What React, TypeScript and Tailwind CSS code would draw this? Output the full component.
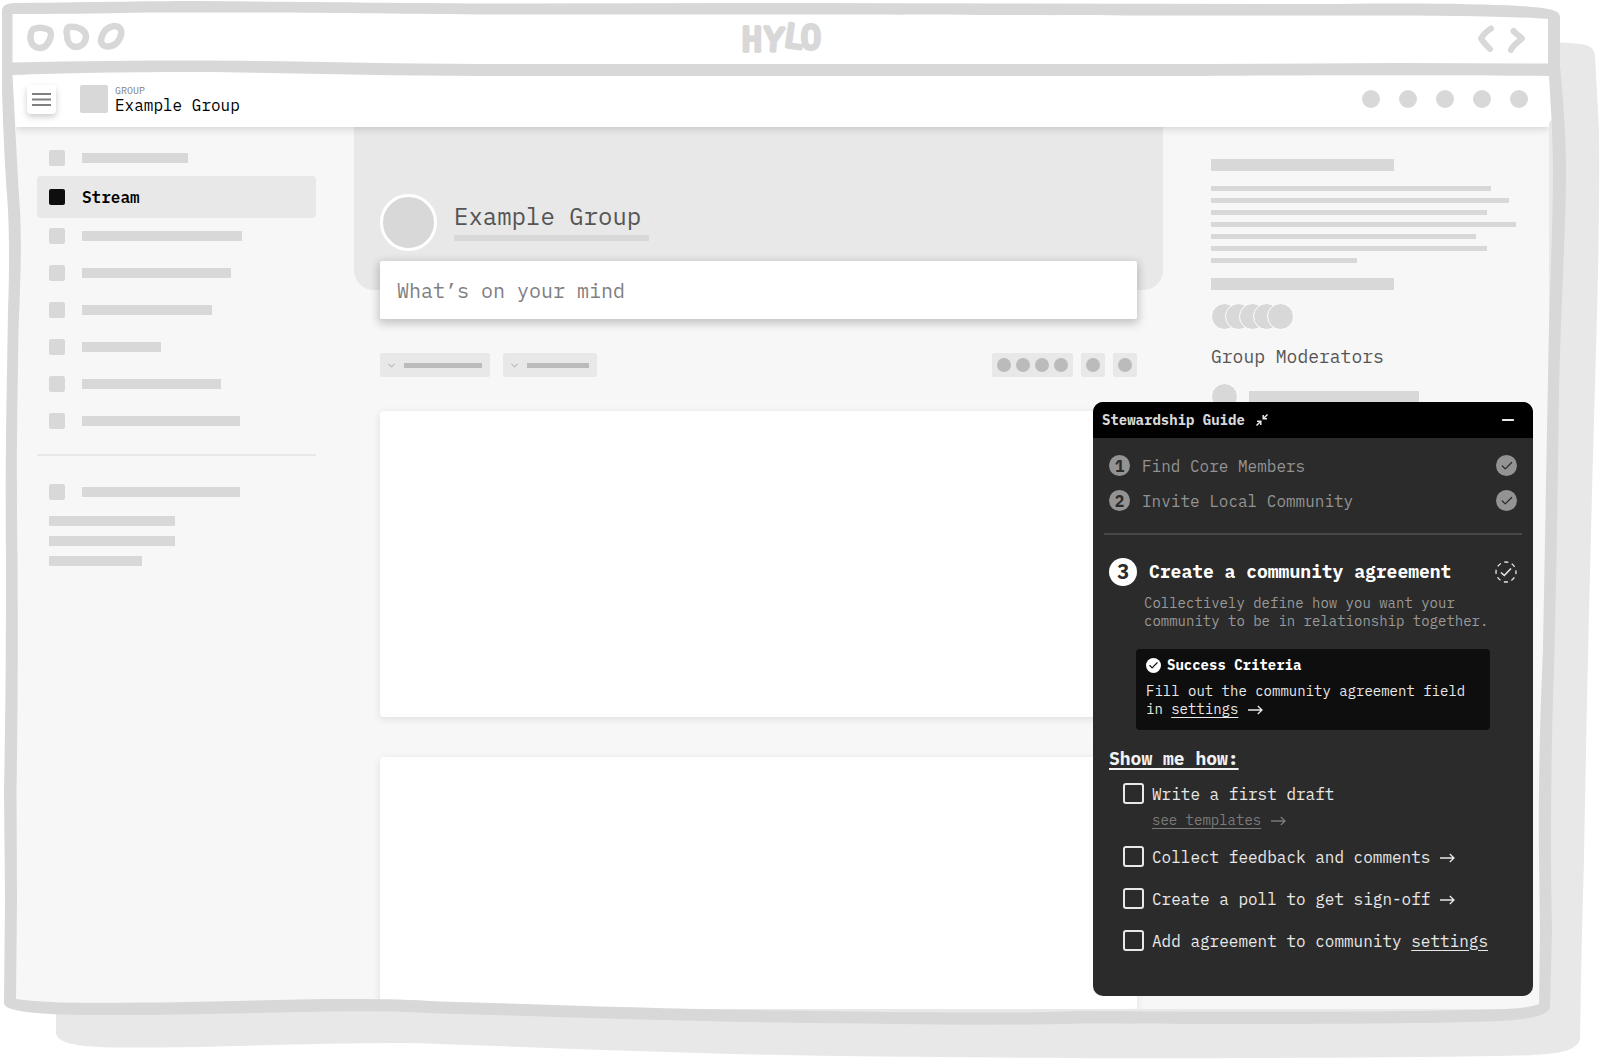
import { Check, ChevronDown, Minus } from "lucide-react";
import type { ReactNode } from "react";

const navBefore = ["w-[106px]"];
const navAfter = ["w-[160px]", "w-[149px]", "w-[130px]", "w-[79px]", "w-[139px]", "w-[158px]"];
const navFooter = ["w-[126px]", "w-[126px]", "w-[93px]"];
const aboutLines = [
  "w-[280px]",
  "w-[298px]",
  "w-[276px]",
  "w-[305px]",
  "w-[265px]",
  "w-[276px]",
  "w-[146px]",
];

const doneSteps = ["Find Core Members", "Invite Local Community"];

function Arrow() {
  return (
    <svg
      viewBox="0 0 15 10"
      className="ml-[10px] inline-block h-[10px] w-[15px] shrink-0"
      fill="none"
      stroke="currentColor"
      strokeWidth="1.3"
    >
      <path d="M0 5h14M9.8 1l4.2 4-4.2 4" />
    </svg>
  );
}

/* Drop shadow of the sketched window */
function WindowShadow() {
  return (
    <svg
      viewBox="0 0 1600 1059"
      preserveAspectRatio="none"
      className="absolute inset-0 -z-10 h-full w-full"
    >
      <path
        fill="#e8e8e8"
        d="M56 1000 V1034 C60 1044 76 1046 110 1047.500 C200 1048.500 290 1043 410 1043 C500 1046 600 1050 700 1053 C800 1056 900 1057 1000 1057.500 C1150 1059 1350 1058 1500 1056 C1550 1055 1576 1054 1580 1039 C1581 980 1582 920 1584 860 C1586 740 1590 560 1594 420 C1597 320 1600 220 1599 130 L1595 56 C1594 44 1585 44 1560 42.500 L1552 42 V120 L1540 130 V1000 Z"
      />
    </svg>
  );
}

/* Hand drawn border of the window and the line under its title bar */
function WindowFrame() {
  return (
    <svg
      viewBox="0 0 1600 1059"
      preserveAspectRatio="none"
      className="pointer-events-none absolute inset-0 z-20 h-full w-full"
    >
      <path
        fill="#d8d8d8"
        fillRule="evenodd"
        d="M2 12 C2 5 6 3 18 3 C100 2 160 1 200 1 C300 2 400 3 480 3.500 L780 3 L1340 4 C1420 3 1480 4 1520 6 C1545 8 1560 9 1560 17 V66 C1563 100 1566 130 1566 170 C1566 230 1561 300 1559 390 C1558 480 1556 600 1554 670 C1551 750 1550 850 1552 930 L1550 1006 C1550 1016 1530 1019 1500 1021 C1400 1025 1200 1024 1080 1023.500 C1000 1026 900 1024 780 1022.500 C660 1021 540 1016 440 1013.500 C400 1011 360 1010.500 300 1012 C200 1014 130 1016 60 1014.500 C25 1013 4 1010 4 1003 L5 900 L4 790 C6 700 6 620 6 560 C5 460 7 380 8 310 C10 260 9 220 7 195 C4 150 3 120 2 90 Z
           M12.500 14 V62.500 C80 61 140 60.500 200 60.500 C300 61 380 63.500 480 64 H1200 L1400 63 L1548 63.500 V19 C1520 16.500 1450 15.500 1340 15.500 C1100 16 1000 14.500 780 14.500 H480 C350 13.500 250 12 150 12.500 C100 13.500 50 14 12.500 14 Z
           M12.500 75 C60 73 130 72 200 72 C300 73 380 75.500 480 76 H1200 C1340 75 1450 75 1549 76 C1551 110 1553 140 1553 170 C1553 230 1549 300 1548 380 C1546 480 1544 600 1543 650 C1539 740 1538.500 800 1539 860 L1540 930 L1539 1004 C1530 1008 1510 1009 1490 1009.500 C1400 1012.500 1200 1012 1080 1011 C1000 1014 900 1012 780 1010.500 C660 1009 540 1004 440 1001.500 C400 999 360 998.500 300 999.500 C200 1002 130 1003.500 60 1002.500 C40 1001.500 25 1000.500 16 999 L17 900 L16.500 790 C18 700 18 620 17.500 560 C16 460 18 380 18.500 330 C21 270 21.500 240 20 210 C18 180 15 120 12.500 75 Z"
      />
    </svg>
  );
}

function TitleBar() {
  return (
    <div className="mr-[60px] grid h-[71px] grid-cols-3 items-center pl-6 text-[#d8d8d8]">
      <svg
        viewBox="24 18 104 35"
        className="h-[35px] w-[104px]"
        fill="none"
        stroke="currentColor"
        strokeWidth="6.5"
        strokeLinejoin="round"
      >
        <path d="M35 28.500 C39 27.500 46 27.500 49 30 C54 34 48 48 40 48 C33 48 30 42 30.500 36 C31 32 32 29 35 28.500Z" />
        <path d="M69 27 C76 26 85 29 86 36 C86 42 82 47 75 47 C69 46 67 40 67 35 C66 31 67 28 69 27Z" />
        <path d="M114 26 C120 26 122 30 121 35 C119 42 114 47 107 46.500 C101 46 100 41 102 36 C104 30 108 27 114 26Z" />
      </svg>
      <svg
        viewBox="0 0 84 35"
        className="h-[35px] w-[84px] justify-self-center overflow-visible"
        fill="currentColor"
        stroke="currentColor"
        strokeWidth="4"
        strokeLinejoin="round"
        fontSize="33"
      >
        <text x="2 23 43 61" y="33 32 28 31" rotate="0 4 8 0">
          HYLO
        </text>
      </svg>
      <svg
        viewBox="1476 18 64 35"
        className="h-[35px] w-[64px] justify-self-end"
        fill="none"
        stroke="currentColor"
        strokeWidth="6"
        strokeLinecap="round"
        strokeLinejoin="round"
      >
        <path d="M1491 28.500 C1487 31 1483 35 1481 38.500 C1483 42 1487 46 1490 49" />
        <path d="M1513.500 31 C1516 34 1520 36 1522 38.500 C1518 42 1512 46 1511 50" />
      </svg>
    </div>
  );
}

function AppHeader() {
  return (
    <header className="relative z-10 flex h-14 items-center bg-white pr-[21px] pl-[11px] shadow-[0_2px_8px_rgba(0,0,0,0.15)]">
      <button
        aria-label="Menu"
        className="flex size-[29px] items-center justify-center rounded-sm bg-white text-[#808080] shadow-[0_3px_6px_rgba(0,0,0,0.2)]"
      >
        <svg viewBox="0 0 19 13" className="h-[13px] w-[19px]" stroke="currentColor" strokeWidth="2">
          <path d="M0 1h19M0 6.500h19M0 12h19" />
        </svg>
      </button>
      <div className="ml-6 size-7 rounded-xs bg-[#d8d8d8]" />
      <div className="ml-[7px] pt-0.5">
        <div className="text-[10px] leading-[10px] text-[#808080]">GROUP</div>
        <div className="text-base leading-[18px] text-black">Example Group</div>
      </div>
      <div className="ml-auto flex gap-[19px]">
        {[0, 1, 2, 3, 4].map((i) => (
          <span key={i} className="size-[18px] rounded-full bg-[#d8d8d8]" />
        ))}
      </div>
    </header>
  );
}

function NavRow({ width }: { width: string }) {
  return (
    <div className="flex h-[37px] items-center gap-[17px] px-3">
      <span className="size-4 rounded-xs bg-[#d8d8d8]" />
      <span className={`h-[10px] bg-[#d8d8d8] ${width}`} />
    </div>
  );
}

function Sidebar() {
  return (
    <nav className="w-[279px] shrink-0 pt-3">
      {navBefore.map((w) => (
        <NavRow key={w} width={w} />
      ))}
      <a
        href="#stream"
        className="flex h-[42px] items-center gap-[17px] rounded bg-[#e8e8e8] px-3 font-semibold text-black"
      >
        <span className="size-4 rounded-xs bg-[#0e0e0e]" />
        Stream
      </a>
      <div className="-mt-px">
        {navAfter.map((w) => (
          <NavRow key={w} width={w} />
        ))}
      </div>
      <hr className="mt-[15px] mb-[17px] border-t-2 border-[#e8e8e8]" />
      <NavRow width="w-[158px]" />
      <div className="mt-[6px] flex flex-col gap-[10px] px-3">
        {navFooter.map((w, i) => (
          <span key={i} className={`h-[10px] bg-[#d8d8d8] ${w}`} />
        ))}
      </div>
    </nav>
  );
}

function FilterButton({ label, width }: { label: string; width: string }) {
  return (
    <button
      aria-label={label}
      className="flex h-6 items-center gap-[7px] rounded-xs bg-[#e8e8e8] px-[6px] text-[#bbb]"
    >
      <ChevronDown size={11} strokeWidth={2.5} />
      <span className={`mr-[2px] h-[5px] bg-[#bbb] ${width}`} />
    </button>
  );
}

function ViewButton({ label }: { label: string }) {
  return (
    <button
      aria-label={label}
      className="flex size-6 items-center justify-center rounded-xs bg-[#e8e8e8]"
    >
      <span className="size-[14px] rounded-full bg-[#bbb]" />
    </button>
  );
}

function Stream() {
  return (
    <main className="flex min-w-0 flex-1 flex-col">
      <div className="flex h-[163px] items-end gap-[17px] rounded-b-[20px] bg-[#e8e8e8] px-[26px] pb-[39px]">
        <span className="size-[57px] shrink-0 rounded-full border-[3px] border-white bg-[#d8d8d8]" />
        <div className="mb-[10px] w-[195px]">
          <h1 className="text-2xl leading-8 whitespace-nowrap text-[#555]">Example Group</h1>
          <div className="mt-[3px] h-[6px] bg-[#d8d8d8]" />
        </div>
      </div>
      <div className="flex flex-1 flex-col px-[26px]">
        <input
          type="text"
          aria-label="New post"
          placeholder="What’s on your mind"
          className="-mt-[29px] h-[58px] w-full rounded-xs bg-white px-[17px] text-xl text-[#555] shadow-[0_3px_8px_2px_rgba(0,0,0,0.2)] placeholder:text-[#808080]"
        />
        <div className="mt-[34px] flex items-center">
          <div className="flex gap-[13px]">
            <FilterButton label="Sort" width="w-[78px]" />
            <FilterButton label="Type" width="w-[62px]" />
          </div>
          <div className="ml-auto flex items-center gap-2">
            <div className="flex h-6 items-center gap-[5px] rounded-xs bg-[#e8e8e8] px-[5px]">
              {[0, 1, 2, 3].map((i) => (
                <span key={i} className="size-[14px] rounded-full bg-[#bbb]" />
              ))}
            </div>
            <ViewButton label="Search" />
            <ViewButton label="Settings" />
          </div>
        </div>
        <article className="mt-[34px] h-[306px] rounded-sm bg-white shadow-[0_2px_8px_rgba(0,0,0,0.1)]" />
        <article className="mt-10 flex-1 rounded-t-sm bg-white shadow-[0_2px_8px_rgba(0,0,0,0.1)]" />
      </div>
    </main>
  );
}

function About() {
  return (
    <aside className="w-[306px] shrink-0 pt-8">
      <div className="h-3 w-[183px] bg-[#d8d8d8]" />
      <div className="mt-[15px] flex flex-col gap-[7px]">
        {aboutLines.map((w, i) => (
          <span key={i} className={`h-[5px] bg-[#d8d8d8] ${w}`} />
        ))}
      </div>
      <div className="mt-[15px] h-3 w-[183px] bg-[#d8d8d8]" />
      <div className="mt-[13px] flex -space-x-[13px]">
        {[0, 1, 2, 3, 4].map((i) => (
          <span key={i} className="size-[27px] rounded-full border border-white bg-[#d8d8d8]" />
        ))}
      </div>
      <h2 className="mt-[15px] text-lg leading-6 text-[#555]">Group Moderators</h2>
      <div className="mt-[14px] flex items-center gap-[11px]">
        <span className="size-[27px] rounded-full border border-white bg-[#d8d8d8]" />
        <span className="h-[11px] w-[170px] bg-[#d8d8d8]" />
      </div>
    </aside>
  );
}

function Task({ id, note, children }: { id: string; note?: ReactNode; children: ReactNode }) {
  return (
    <li>
      <div className="flex h-[21px] items-center gap-2">
        <input
          id={id}
          type="checkbox"
          className="size-[21px] shrink-0 appearance-none rounded-[3px] border-2 border-[#e8e8e8] checked:bg-[#e8e8e8]"
        />
        <label htmlFor={id} className="whitespace-nowrap">
          {children}
        </label>
      </div>
      {note}
    </li>
  );
}

function StewardshipGuide() {
  return (
    <section className="absolute right-4 bottom-[13px] z-10 w-[440px] overflow-hidden rounded-[10px] bg-[#2b2b2b] text-[#e8e8e8]">
      <div className="flex h-9 items-center bg-black px-[9px]">
        <h2 className="text-sm font-bold text-[#d8d8d8]">Stewardship Guide</h2>
        <button aria-label="Collapse" className="ml-[11px]">
          <svg viewBox="0 0 12 12" className="size-3" fill="none" stroke="currentColor" strokeWidth="1.5">
            <path d="M11.500 .5L7.500 4.500M7.200 1v3.800H11M.5 11.500l4-4M1 7.200h3.800V11" />
          </svg>
        </button>
        <button aria-label="Minimize" className="ml-auto mr-[7px]">
          <Minus size={18} strokeWidth={2.5} />
        </button>
      </div>

      <div className="px-4 pt-[17px] pb-[45px]">
        <ol className="flex flex-col gap-[14px] text-[#939393]">
          {doneSteps.map((step, i) => (
            <li key={step} className="flex h-[21px] items-center">
              <span className="flex size-[21px] items-center justify-center rounded-full bg-[#939393] font-bold text-[#2b2b2b]">
                {i + 1}
              </span>
              <span className="ml-3">{step}</span>
              <span className="ml-auto flex size-[21px] items-center justify-center rounded-full bg-[#939393] text-[#2b2b2b]">
                <Check size={14} strokeWidth={2.2} />
              </span>
            </li>
          ))}
        </ol>

        <hr className="-mx-[5px] mt-[22px] border-t-2 border-[#484848]" />

        <div className="mt-[23px] flex items-center">
          <span className="flex size-7 items-center justify-center rounded-full bg-white text-xl font-bold text-[#2b2b2b]">
            3
          </span>
          <h3 className="ml-3 text-lg leading-7 font-bold whitespace-nowrap text-white">
            Create a community agreement
          </h3>
          <svg
            viewBox="0 0 22 22"
            className="ml-auto size-[22px]"
            fill="none"
            stroke="currentColor"
            strokeWidth="1.3"
          >
            <circle cx="11" cy="11" r="10" strokeDasharray="4.2 3.654" strokeDashoffset="2.1" />
            <path d="M6 11.500l3.300 3L16 7.500" strokeWidth="1.6" />
          </svg>
        </div>
        <p className="mt-2 ml-[35px] text-sm leading-[18px] text-[#999]">
          Collectively define how you want your
          <br />
          community to be in relationship together.
        </p>

        <div className="mx-[27px] mt-[19px] rounded bg-[#0e0e0e] px-[10px] pt-[7px] pb-3 text-sm leading-[18px]">
          <h4 className="flex items-center gap-[6px] font-bold text-white">
            <span className="flex size-[15px] items-center justify-center rounded-full bg-white text-[#0e0e0e]">
              <Check size={11} strokeWidth={2.5} />
            </span>
            Success Criteria
          </h4>
          <p className="mt-2">
            Fill out the community agreement field
            <br />
            in{" "}
            <a href="#settings" className="underline underline-offset-3">
              settings
            </a>
            <Arrow />
          </p>
        </div>

        <h3 className="mt-[17px] text-lg leading-6 font-bold text-[#f2f2f2] underline decoration-2 underline-offset-3">
          Show me how:
        </h3>
        <ul className="mt-3 ml-[14px] flex flex-col gap-[21px]">
          <Task
            id="draft"
            note={
              <p className="mt-[7px] -mb-1 ml-[29px] text-sm leading-[18px] text-[#7a7a7a]">
                <a href="#templates" className="underline underline-offset-3">
                  see templates
                </a>
                <Arrow />
              </p>
            }
          >
            Write a first draft
          </Task>
          <Task id="feedback">
            Collect feedback and comments
            <Arrow />
          </Task>
          <Task id="poll">
            Create a poll to get sign-off
            <Arrow />
          </Task>
          <Task id="agreement">
            Add agreement to community{" "}
            <a href="#settings" className="underline underline-offset-3">
              settings
            </a>
          </Task>
        </ul>
      </div>
    </section>
  );
}

export default function App() {
  return (
    <div className="relative isolate flex min-h-screen flex-col overflow-hidden bg-white pb-[50px] font-['IBM_Plex_Mono','Liberation_Mono',monospace]">
      <WindowShadow />
      <WindowFrame />
      <TitleBar />
      <div className="relative mr-[51px] ml-4 flex flex-1 flex-col overflow-hidden bg-[#f7f7f7]">
        <AppHeader />
        <div className="flex flex-1 pr-8 pl-[21px]">
          <Sidebar />
          <div className="mr-12 ml-[38px] flex min-w-0 flex-1">
            <Stream />
          </div>
          <About />
        </div>
        <StewardshipGuide />
      </div>
    </div>
  );
}
